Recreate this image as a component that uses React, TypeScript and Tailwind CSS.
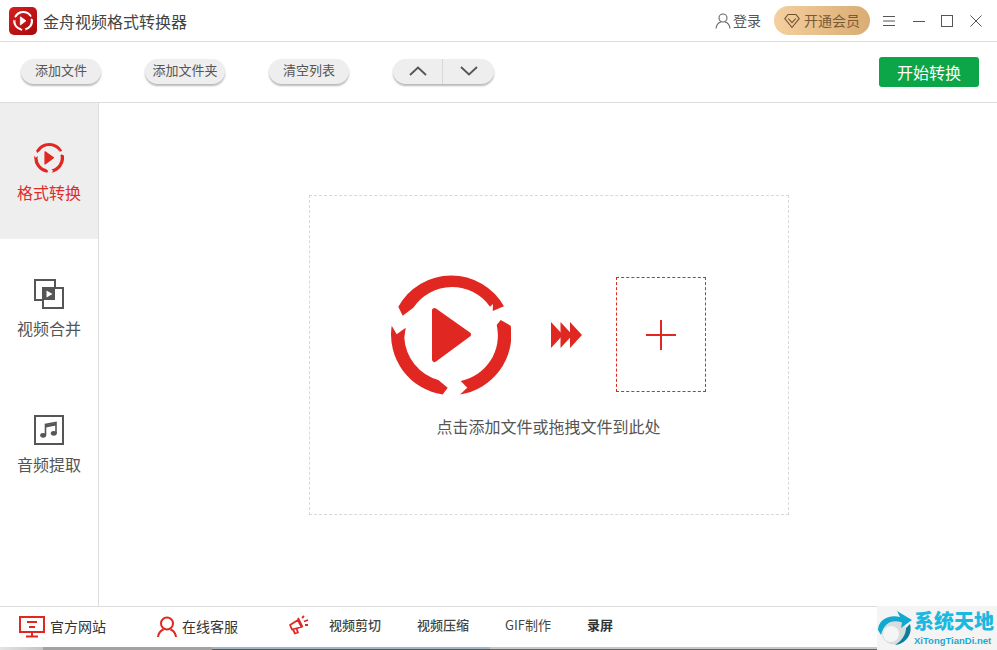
import React from "react";

const font = { fontFamily: '"Noto Sans CJK SC", "Liberation Sans", sans-serif' };

function Logo({ size, fill = "#e02722", className = "" }: { size: number; fill?: string; className?: string }) {
  return (
    <svg width={size} height={size} viewBox="10 10 121 121" className={className} fill={fill}>
      <path d="M18.3 41.7A60.5 60.5 0 0 1 124 41.3L112.7 46L113 39L110 41.7A46.5 46.5 0 0 0 33.3 42.7L22.7 50.7Z" />
      <path d="M120.7 55L130.7 60.7A60.5 60.5 0 0 1 80 129.5L87.3 122.7L80.7 116A46.5 46.5 0 0 0 116.7 60Z" />
      <path d="M11.7 60.7L16.7 69.3L25.7 62.7L24.3 72.7A46.5 46.5 0 0 0 58.3 115L67.7 122.7L62.7 129.5A60.5 60.5 0 0 1 11.7 60.7Z" />
      <path d="M54.5 45.5L88.5 69.5L54.5 94.5Z" stroke={fill} strokeWidth="5" strokeLinejoin="round" />
    </svg>
  );
}

function PillButton({ label }: { label: string }) {
  return (
    <button className="w-[80px] h-[25px] rounded-full bg-[#eeeeee] shadow-[0_2px_2px_rgba(0,0,0,0.28)] text-[13px] leading-[22px] pb-[3px] text-[#555555] text-center">
      {label}
    </button>
  );
}

function SideItem({ icon, label, active = false }: { icon: React.ReactNode; label: string; active?: boolean }) {
  return (
    <div className={`h-[136px] flex flex-col items-center pt-[40px] ${active ? "bg-[#eeeeee] text-[#e02b2b]" : "text-[#555555]"}`}>
      <div className="h-[30px] flex items-center justify-center">{icon}</div>
      <div className="mt-[7px] text-[16px] leading-[24px]">{label}</div>
    </div>
  );
}

export default function App() {
  return (
    <div style={font} className="w-[997px] h-[650px] bg-white flex flex-col overflow-hidden text-[#555555]">
      {/* Title bar */}
      <div className="h-[42px] shrink-0 border-b border-[#dddddd] flex items-center pl-[9px]">
        <div className="w-[28px] h-[28px] rounded-[5px] bg-gradient-to-br from-[#d81e1e] to-[#a80808] flex items-center justify-center">
          <Logo size={20} fill="#ffffff" />
        </div>
        <div className="ml-[6px] text-[16px] leading-[24px] text-[#444444]">金舟视频格式转换器</div>
        <div className="ml-auto flex items-center">
          <svg width="16" height="16" viewBox="0 0 16 16" fill="none" stroke="#666666" strokeWidth="1.1">
            <circle cx="8" cy="5" r="4" />
            <path d="M1 15.5C1.5 11.5 4 9.5 6 9M15 15.5C14.5 11.5 12 9.5 10 9" />
          </svg>
          <span className="ml-[2px] text-[14px] leading-[20px] pb-[2px] text-[#555555]">登录</span>
          <div className="ml-[13px] w-[96px] h-[29px] rounded-full bg-gradient-to-r from-[#f5cf9f] to-[#d9ad73] flex items-center pl-[10px] text-[#7a5a33]">
            <svg width="16" height="16" viewBox="0 0 16 16" fill="none" stroke="#6e5230" strokeWidth="1.1" strokeLinejoin="round">
              <path d="M4 1.5H12L15.2 5.7L8 14.5L0.8 5.7Z" />
              <path d="M4.2 5.5L8 9.6L11.8 5.5" />
            </svg>
            <span className="ml-[4px] text-[14px] leading-[20px] pb-[1px]">开通会员</span>
          </div>
          <svg className="ml-[13px]" width="12" height="12" viewBox="0 0 12 12" stroke="#555555" strokeWidth="1">
            <path d="M0 1.5H12M0 6H12M0 10.5H12" />
          </svg>
          <svg className="ml-[18px]" width="12" height="12" viewBox="0 0 12 12" stroke="#555555" strokeWidth="1">
            <path d="M0 6.5H12" />
          </svg>
          <svg className="ml-[16px]" width="12" height="12" viewBox="0 0 12 12" fill="none" stroke="#555555" strokeWidth="1">
            <rect x="0.5" y="0.5" width="11" height="11" />
          </svg>
          <svg className="ml-[17px] mr-[15px]" width="12" height="12" viewBox="0 0 12 12" stroke="#555555" strokeWidth="1">
            <path d="M0.5 0.5L11.5 11.5M11.5 0.5L0.5 11.5" />
          </svg>
        </div>
      </div>

      {/* Toolbar */}
      <div className="h-[61px] shrink-0 border-b border-[#dddddd] flex items-center pl-[21px] pr-[18px]">
        <div className="flex items-center gap-[44px] mb-[2px]">
          <PillButton label="添加文件" />
          <PillButton label="添加文件夹" />
          <PillButton label="清空列表" />
          <div className="w-[101px] h-[25px] rounded-full bg-[#eeeeee] shadow-[0_2px_2px_rgba(0,0,0,0.28)] flex items-center">
            <div className="w-[50px] h-full flex items-center justify-center border-r border-[#d8d8d8]">
              <svg width="18" height="10" viewBox="0 0 18 10" fill="none" stroke="#555555" strokeWidth="1.8">
                <path d="M1 9L9 1.5L17 9" />
              </svg>
            </div>
            <div className="flex-1 h-full flex items-center justify-center">
              <svg width="18" height="10" viewBox="0 0 18 10" fill="none" stroke="#555555" strokeWidth="1.8">
                <path d="M1 1L9 8.5L17 1" />
              </svg>
            </div>
          </div>
        </div>
        <button className="ml-auto w-[100px] h-[30px] rounded-[3px] bg-[#0ca548] text-white text-[16px] leading-[30px] text-center">
          开始转换
        </button>
      </div>

      {/* Body */}
      <div className="flex-1 flex min-h-0">
        <div className="w-[99px] shrink-0 border-r border-[#dddddd]">
          <SideItem active label="格式转换" icon={<Logo size={30} />} />
          <SideItem
            label="视频合并"
            icon={
              <svg width="30" height="30" viewBox="0 0 30 30" fill="none">
                <rect x="1" y="1" width="20" height="20" stroke="#555555" strokeWidth="2" />
                <rect x="9" y="9" width="20" height="20" stroke="#555555" strokeWidth="2" fill="#ffffff" />
                <rect x="9" y="9" width="12" height="12" fill="#555555" />
                <path d="M12.5 11.5L18.5 15L12.5 18.5Z" fill="#ffffff" />
              </svg>
            }
          />
          <SideItem
            label="音频提取"
            icon={
              <svg width="30" height="30" viewBox="0 0 30 30" fill="none">
                <rect x="1" y="1" width="28" height="28" stroke="#555555" strokeWidth="2" />
                <path d="M11.5 20V9.5L22 7.5V18" stroke="#555555" strokeWidth="1.6" />
                <path d="M11.5 10L22 8V10.5L11.5 12.5Z" fill="#555555" />
                <ellipse cx="9.2" cy="20.3" rx="3" ry="2.4" fill="#555555" />
                <ellipse cx="19.8" cy="18.3" rx="3" ry="2.4" fill="#555555" />
              </svg>
            }
          />
        </div>
        <div className="flex-1 flex items-center justify-center pl-[1px] pt-[1px]">
          <div className="w-[480px] h-[320px] border border-dashed border-[#d8d8d8] flex flex-col items-center pt-[81px]">
            <div className="flex items-start pr-[1px]">
              <div className="-mt-[2px]">
                <Logo size={121} />
              </div>
              <svg className="ml-[40px] mt-[45px]" width="31" height="26" viewBox="0 0 31 26" fill="#e02722">
                <path d="M0 0L12 13L0 26Z" />
                <path d="M9.5 0L21.5 13L9.5 26Z" />
                <path d="M19 0L31 13L19 26Z" />
              </svg>
              <div className="ml-[34px] w-[90px] h-[115px] border border-dashed border-[#e02722] flex items-center justify-center">
                <svg width="30" height="30" viewBox="0 0 30 30" stroke="#e02722" strokeWidth="2">
                  <path d="M15 0V30M0 15H30" />
                </svg>
              </div>
            </div>
            <div className="mt-[18px] text-[16px] leading-[24px] text-[#555555]">点击添加文件或拖拽文件到此处</div>
          </div>
        </div>
      </div>

      {/* Footer */}
      <div className="h-[44px] shrink-0 border-t border-[#dddddd] flex flex-col">
        <div className="flex-1 flex min-h-0">
          <div className="flex-1 flex items-center pl-[19px] pb-[1px]">
            <svg width="26" height="22" viewBox="0 0 26 22" fill="none" stroke="#e02722" strokeWidth="2">
              <rect x="1" y="1" width="24" height="15" />
              <path d="M8 6H18M10 11H16M13 16V20M7 20.5H19" />
            </svg>
            <span className="ml-[5px] text-[14px] leading-[20px] pb-[1px] text-[#333333]">官方网站</span>
            <svg className="ml-[51px]" width="20" height="22" viewBox="0 0 20 22" fill="none" stroke="#e02722" strokeWidth="2">
              <circle cx="10" cy="7.5" r="6" />
              <path d="M1 21C1.5 16.5 4 14.5 6.5 13.5M19 21C18.5 16.5 16 14.5 13.5 13.5" />
            </svg>
            <span className="ml-[5px] text-[14px] leading-[20px] pb-[1px] text-[#333333]">在线客服</span>
            <svg className="ml-[50px] mb-[3px]" width="21" height="20" viewBox="0 0 21 20" fill="none" stroke="#e02722" strokeWidth="1.8" strokeLinejoin="round">
              <path d="M2 10L10 5L13.5 12L4 14.5Z" />
              <path d="M5 14.5L7 18.5L10 17.5L8.5 13.7" />
              <path d="M10 3L14.5 12M14 3L16 1M16 6.5L20 5M17 10H20" />
            </svg>
            <div className="ml-[20px] flex items-center text-[13px] leading-[20px] font-medium text-[#444444] mb-[3px]">
              <span className="w-[88px]">视频剪切</span>
              <span className="w-[88px]">视频压缩</span>
              <span className="w-[82px] font-normal">GIF制作</span>
              <span className="font-bold text-[#333333]">录屏</span>
            </div>
          </div>
          <div className="w-[120px] -mt-[1px] bg-[#f4f4f4] flex items-center relative z-10 h-[44px]">
            <svg className="shrink-0" width="36" height="36" viewBox="0 0 36 36">
              <circle cx="17" cy="22" r="12.5" fill="#d9dddf" />
              <circle cx="14" cy="24" r="8" fill="#f4f5f5" />
              <path d="M1 20C1 10 12 4 23 7L20 1L35 10L24 18L25 12.5C16 9 7 12 4 25Z" fill="#12a8cf" />
              <path d="M33 14C36 25 28 34 18 35C25 31 29 24 29 18Z" fill="#0d7f9d" />
            </svg>
            <div className="ml-[1px] flex flex-col items-start h-[38px]">
              <span className="text-[20px] leading-[24px] font-black text-[#1cb8e0] whitespace-nowrap">系统天地</span>
              <span className="text-[9.5px] leading-[12px] mt-[2px] font-bold text-[#1aa9d0]" style={{ fontFamily: '"Liberation Sans", sans-serif' }}>
                XiTongTianDi.net
              </span>
            </div>
          </div>
        </div>
        <div className="h-[3px] shrink-0 flex">
          <div className="w-[43px] bg-gradient-to-r from-[#e4e4e4] to-[#c4c4c4]" />
          <div className="w-[169px] bg-[#a2a2a2]" />
          <div className="w-[278px] flex flex-col">
            <div className="h-[2px] bg-[#9fb6c6]" />
            <div className="h-[1px] bg-[#555555]" />
          </div>
          <div className="w-[387px] flex flex-col">
            <div className="h-[2px] bg-[#c8c8c8]" />
            <div className="h-[1px] bg-[#666666]" />
          </div>
        </div>
      </div>
    </div>
  );
}
